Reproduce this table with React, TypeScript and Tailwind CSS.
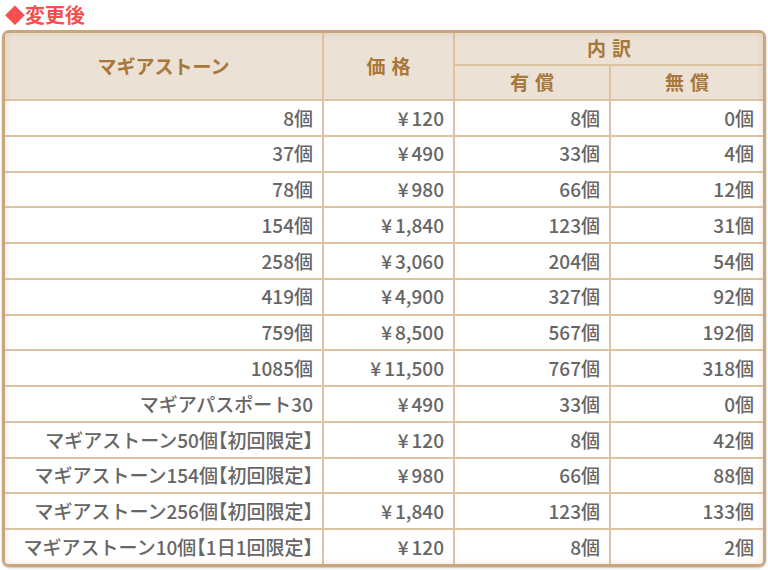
import React from "react";

const rows: [string, string, string, string][] = [
  ["8個", "¥120", "8個", "0個"],
  ["37個", "¥490", "33個", "4個"],
  ["78個", "¥980", "66個", "12個"],
  ["154個", "¥1,840", "123個", "31個"],
  ["258個", "¥3,060", "204個", "54個"],
  ["419個", "¥4,900", "327個", "92個"],
  ["759個", "¥8,500", "567個", "192個"],
  ["1085個", "¥11,500", "767個", "318個"],
  ["マギアパスポート30", "¥490", "33個", "0個"],
  ["マギアストーン50個【初回限定】", "¥120", "8個", "42個"],
  ["マギアストーン154個【初回限定】", "¥980", "66個", "88個"],
  ["マギアストーン256個【初回限定】", "¥1,840", "123個", "133個"],
  ["マギアストーン10個【1日1回限定】", "¥120", "8個", "2個"],
];

const head =
  "bg-[#ebe1d5] flex items-center justify-center text-[19px] font-bold text-[#a8773b]";

function Cell({ text }: { text: string }) {
  const parts = text.split(/([【】¥])/).filter((p) => p !== "");
  return (
    <div className="bg-white flex items-center justify-end pr-[9px] text-[19px] font-medium text-[#666666] whitespace-nowrap">
      {parts.map((p, k) =>
        p === "【" || p === "】" ? (
          <span key={k} className="[font-feature-settings:'halt']">
            {p}
          </span>
        ) : p === "¥" ? (
          <span key={k} className="mr-[3px]">
            {p}
          </span>
        ) : (
          <span key={k}>{p}</span>
        )
      )}
    </div>
  );
}

export default function App() {
  return (
    <div
      className="w-[768px] h-[570px] bg-white overflow-hidden"
      style={{ fontFamily: '"Noto Sans CJK JP", "Noto Sans", sans-serif' }}
    >
      <div className="h-[30px] pl-[5px] flex items-center">
        <span className="text-[20px] leading-none font-bold text-[#f5504f]">◆変更後</span>
      </div>
      <div className="relative ml-[2px] w-[764px] h-[537px] border-[3px] border-[#c9a67c] rounded-[7px] overflow-hidden shadow-[0_1px_2px_rgba(0,0,0,0.25)]">
        <div className="grid h-full grid-cols-[317px_129px_154px_152px] grid-rows-[31px_33px_repeat(13,1fr)] gap-[2px] bg-[#dcc3a2]">
          <div className={`${head} row-span-2`}>マギアストーン</div>
          <div className={`${head} row-span-2 tracking-[6px] pl-[6px]`}>価格</div>
          <div className={`${head} col-span-2 tracking-[6px] pl-[6px]`}>内訳</div>
          <div className={`${head} tracking-[6px] pl-[6px]`}>有償</div>
          <div className={`${head} tracking-[6px] pl-[6px]`}>無償</div>
          {rows.map((r, i) => (
            <React.Fragment key={i}>
              {r.map((c, j) => (
                <Cell key={j} text={c} />
              ))}
            </React.Fragment>
          ))}
        </div>
        <div className="pointer-events-none absolute inset-0 rounded-[4px] shadow-[inset_0_0_6px_rgba(201,166,124,0.35)]" />
      </div>
    </div>
  );
}
